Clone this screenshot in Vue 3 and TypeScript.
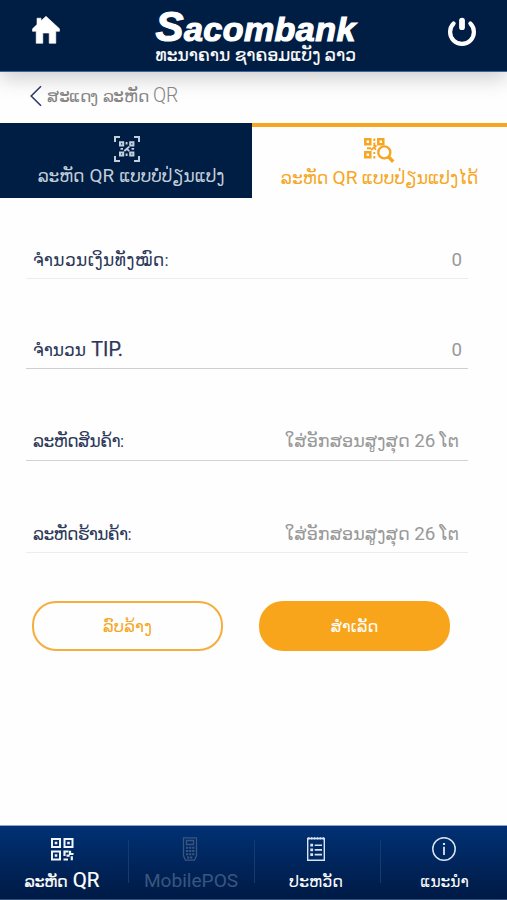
<script setup lang="ts">
import { h, ref } from 'vue'

interface Field {
  id: string
  label: string
  hint: string
}

const fields: Field[] = [
  { id: 'total', label: 'ຈຳນວນເງິນທັງໝົດ:', hint: '0' },
  { id: 'tip', label: 'ຈຳນວນ TIP.', hint: '0' },
  { id: 'product', label: 'ລະຫັດສິນຄ້າ:', hint: 'ໃສ່ອັກສອນສູງສຸດ 26 ໂຕ' },
  { id: 'store', label: 'ລະຫັດຮ້ານຄ້າ:', hint: 'ໃສ່ອັກສອນສູງສຸດ 26 ໂຕ' },
]

const activeTab = ref<'static' | 'dynamic'>('dynamic')

// Latin letters and digits are set a little larger than the Lao script around them.
const Mixed = (props: { text: string }) =>
  h('span', props.text.split(/([A-Za-z0-9.]+)/).map((part, i) =>
    i % 2 ? h('span', { class: 'latin' }, part) : part))
Mixed.props = ['text']
</script>

<template>
  <div class="screen">
    <header class="header">
      <svg class="home" viewBox="0 0 28 28">
        <path d="M14 .3 9 4.8V2.2H5v6.4L.5 12.8v2.5h3.7v12h6.6V17h6.4v10.3h6.600v-12h3.700v-2.500z" fill="#fff" stroke="#fff" stroke-width=".6" stroke-linejoin="round" />
      </svg>
      <div class="brand">
        <div class="logo"><span class="logo-s">S</span>acombank</div>
        <div class="tagline">ທະນາຄານ ຊາຄອມແບັງ ລາວ</div>
      </div>
      <svg class="power" viewBox="0 0 30 30" fill="none" stroke="#fff" stroke-linecap="round">
        <path d="M6.6 6.6A11.900 11.900 0 1 0 23.400 6.600" stroke-width="4.200" />
        <path d="M15 3.600v6.600" stroke-width="5.800" />
      </svg>
    </header>

    <div class="crumb">
      <svg class="back" viewBox="0 0 12 20"><path d="M11 .2 1.2 10 11 19.8" fill="none" stroke="#2a3c70" stroke-width="1.6" /></svg>
      <Mixed class="crumb-text" text="ສະແດງ ລະຫັດ QR" />
    </div>

    <nav class="tabs">
      <button class="tab first" :class="{ on: activeTab === 'static' }" @click="activeTab = 'static'">
        <svg class="tab-icon" viewBox="0 0 26 26" fill="none" stroke="currentColor">
          <path d="M1 6V1h5M20 1h5v5M1 20v5h5M20 25h5v-5" stroke-width="2" />
          <path d="M6 6.2h3.2v3.2H6zM16.2 6.2h3.2v3.2h-3.2zM6 16.4h3.2v3.2H6zM16.2 16.4h3.2v3.2h-3.2z" stroke-width="2" />
          <path d="M12.6 6v2.4M6.5 12.9H9M10.3 15l5-4.4M12.6 12.6l2.6 2.6M17.5 12.9h2.6M12.6 17.5V20" stroke-width="1.9" />
        </svg>
        <Mixed class="tab-text" text="ລະຫັດ QR ແບບບໍ່ປ່ຽນແປງ" />
      </button>
      <button class="tab second" :class="{ on: activeTab === 'dynamic' }" @click="activeTab = 'dynamic'">
        <svg class="tab-icon wide" viewBox="0 0 30 26" fill="none" stroke="currentColor">
          <path d="M1.3 2.3h5v5h-5zM14.3 2.3h5v5h-5zM1.3 15.3h5v5h-5z" stroke-width="2.5" />
          <path d="M10.3 1.5V4M10.3 5.5V9M3 11.3h4M7 12.9l5.5-4.4M9 10l3 2.6M10.3 15v2M10.3 19v2.5" stroke-width="1.9" />
          <circle cx="20.3" cy="15.4" r="6" stroke-width="2.4" />
          <path d="m24.5 19.8 4.7 4.9" stroke-width="3.4" />
        </svg>
        <Mixed class="tab-text" text="ລະຫັດ QR ແບບປ່ຽນແປງໄດ້" />
      </button>
    </nav>

    <main class="form">
      <label v-for="f in fields" :key="f.id" class="row" :class="f.id">
        <Mixed class="label" :text="f.label" />
        <Mixed class="hint" :text="f.hint" />
      </label>
      <div class="actions">
        <button class="btn outline">ລົບລ້າງ</button>
        <button class="btn solid">ສຳເລັດ</button>
      </div>
    </main>

    <footer class="bar">
      <div class="item qr">
        <svg class="bar-icon" viewBox="0 0 24 24" fill="none" stroke="#f2f6fc" stroke-width="2">
          <path d="M2 2h8v8H2zM14.5 2h8v8h-8zM2 14.5h8v8H2z" />
          <path d="M4.7 6h2.6M17.2 6h2.6M4.7 18.5h2.6" stroke-width="2.6" />
          <path d="M14.5 19v-4.5h4M20 13.8V17h3.5M16.5 18.7h3.2M13.5 22.5H18M21.8 19.2v4" stroke-width="2.2" />
        </svg>
        <Mixed text="ລະຫັດ QR" />
      </div>
      <div class="item pos">
        <svg class="bar-icon" viewBox="0 0 24 24" fill="none" stroke="currentColor">
          <path d="M5.5.8h13v18l-2 4.4h-9l-2-4.4zM8.500 3.500h7v4h-7z" stroke-width="1.3" />
          <path d="M8 10.8h8.5M8 14h8.5M8 17.2h8.5M9 20.5h6" stroke-width="2" stroke-dasharray="2.2 .9" />
        </svg>
        <Mixed text="MobilePOS" />
      </div>
      <div class="item history">
        <svg class="bar-icon" viewBox="0 0 24 24" fill="none" stroke="#dbe4f2">
          <path d="M3.7 1.5h16.6v21.700H3.700z" stroke-width="1.4" />
          <path d="M4 1.4h16" stroke-width="2.4" stroke-dasharray="1.6 1.3" />
          <path d="M6.3 8.2h2.8M6.3 12.9h2.8M6.3 17.6h2.8" stroke-width="2.8" />
          <path d="M10.7 8.2h7.3M10.7 12.9h7.3M10.7 17.6h7.3" stroke-width="1.6" />
        </svg>
        <Mixed text="ປະຫວັດ" />
      </div>
      <div class="item guide">
        <svg class="bar-icon" viewBox="0 0 24 24" fill="none" stroke="#dbe4f2">
          <circle cx="12" cy="12" r="11.2" stroke-width="1.5" />
          <path d="M12 9.8V18" stroke-width="1.8" />
          <path d="M12 6v2" stroke-width="2.1" />
        </svg>
        <Mixed text="ແນະນຳ" />
      </div>
    </footer>
  </div>
</template>

<style>
body {
  background: #fefefe;
}
.latin {
  font-size: 1.11em;
  line-height: 1;
  letter-spacing: 0;
}
</style>

<style scoped>
.screen {
  width: 507px;
  height: 900px;
  display: flex;
  flex-direction: column;
  overflow: hidden;
  background: #fefefe;
  font-family: Roboto, "DejaVu Sans", sans-serif;
  white-space: nowrap;
}
svg { display: block; flex: none; overflow: visible; }
button { font: inherit; padding: 0; border: 0; background: none; color: inherit; }
.header {
  box-sizing: border-box;
  height: 72px;
  flex: none;
  display: flex;
  align-items: flex-start;
  justify-content: space-between;
  padding: 0 30px 0 32px;
  background: #001d43;
  border-bottom: 1px solid #3566a8;
  box-shadow: 0 6px 20px rgba(0, 0, 0, .2);
}
.home { width: 28px; height: 28px; margin-top: 16px; }
.power { width: 30px; height: 30px; margin-top: 17px; }
.brand { width: 202px; margin-left: 6px; color: #fff; }
.logo {
  height: 45px;
  font: italic bold 34px/59px "Liberation Sans", sans-serif;
  letter-spacing: .45px;
  -webkit-text-stroke: 1.2px #fff;
}
.logo-s { font-size: 42px; line-height: 1; }
.tagline { height: 18px; line-height: 20px; font-size: 17px; letter-spacing: .08px; -webkit-text-stroke: .2px #fff; }
.crumb {
  height: 47px;
  flex: none;
  display: flex;
  align-items: center;
  padding: 0 30px 4px;
}
.back { width: 12px; height: 20px; }
.crumb-text { margin: 1px 0 0 5px; font-size: 17px; letter-spacing: -.4px; word-spacing: 1px; color: #858585; font-weight: 300; }
.crumb-text :deep(.latin) { font-size: 19.4px; }
.tabs { display: flex; height: 75px; flex: none; }
.tab {
  box-sizing: border-box;
  width: 252px;
  height: 75px;
  display: flex;
  flex-direction: column;
  align-items: center;
  padding: 13px 0 0;
  background: #001d43;
  color: #c3cedb;
  font-size: 17px;
}
.tab.first { padding-left: 10px; }
.tab.first .tab-icon { margin-right: 8px; }
.tab.first .tab-text { letter-spacing: -.1px; word-spacing: 1px; }
.tab.second { width: 255px; font-size: 17.2px; }
.tab.on { background: #fefefe; color: #f6a623; border-top: 4px solid #f6a623; padding-top: 10px; }
.tab-icon { width: 26px; height: 26px; }
.tab-icon.wide { width: 30px; margin-right: 2px; }
.tab-text { line-height: 24px; margin-top: 2px; }
.tab.second .tab-text { margin-top: 3px; }
.form { flex: 1; padding: 0 39px 0 26px; }
.row {
  box-sizing: border-box;
  display: flex;
  justify-content: space-between;
  align-items: flex-end;
  padding: 0 6px 5px 7px;
  border-bottom: 1px solid #ececec;
  font-size: 17px;
  line-height: 26px;
}
.row.total { height: 81px; }
.row.tip { height: 90px; border-color: #cfcfcf; }
.row.product { height: 92px; padding-bottom: 6px; border-color: #d0d3d4; }
.row.store { height: 92px; }
.row.product, .row.store { padding-right: 9px; }
.total .label { letter-spacing: .42px; }
.tip .label { word-spacing: 1px; }
.tip .label :deep(.latin) { font-size: 19.8px; -webkit-text-stroke: .25px; }
.product .label { letter-spacing: -.5px; }
.store .label { letter-spacing: -.6px; }
.label { color: #2b3858; }
.hint { color: #999; font-size: 17.6px; }
.hint :deep(.latin) { font-size: 18.8px; }
.actions { display: flex; gap: 36px; padding: 48px 0 0 6px; }
.btn {
  box-sizing: border-box;
  width: 191px;
  height: 50px;
  border-radius: 24px;
  font-size: 16.6px;
}
.outline { border: 2px solid #f6ad3c; color: #f6a623; }
.solid { background: #f9a51b; color: #fff; font-size: 16.2px; }
.bar {
  box-sizing: border-box;
  height: 75px;
  flex: none;
  display: grid;
  grid-template-columns: 128px 126px 126px 127px;
  border-top: 1px solid #8ba6cc;
  border-bottom: 1px solid #32517e;
  background: linear-gradient(#003174, #001a45);
}
.item {
  position: relative;
  display: flex;
  flex-direction: column;
  align-items: center;
  padding-top: 11px;
  color: #fff;
  font-size: 16px;
  line-height: 24px;
  gap: 9px;
}
.item + .item::before {
  content: "";
  position: absolute;
  left: 0;
  top: 14px;
  height: 43px;
  border-left: 1px solid #163a72;
}
.bar-icon { width: 24px; height: 24px; }
.qr { padding-right: 4px; letter-spacing: -.4px; word-spacing: 2px; -webkit-text-stroke: .2px; }
.qr :deep(.latin) { font-size: 20.5px; }
.pos { color: #3a567f; }
.pos .bar-icon { margin-right: 2px; }
.pos :deep(.latin) { font-size: 19.1px; }
.history { padding-right: 2px; }
.guide { font-size: 15.4px; padding-left: 2px; }
.guide .bar-icon { margin-right: 2px; }
</style>
